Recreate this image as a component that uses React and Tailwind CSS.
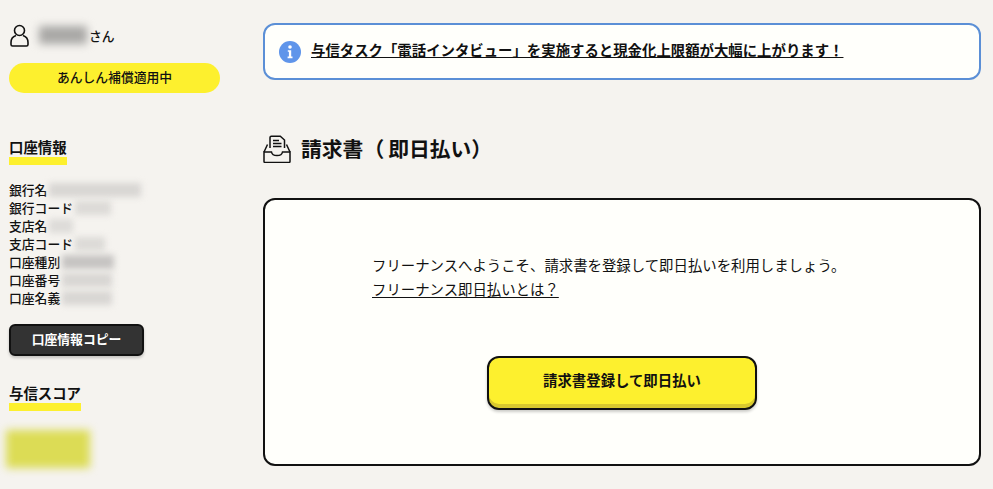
import React from "react";

const font = "font-['Noto_Sans_CJK_JP','Liberation_Sans',sans-serif]";

const accountRows = [
  { label: "銀行名", blur: "w-[92px]", tone: "bg-[#d8d6d3]" },
  { label: "銀行コード", blur: "w-[36px]", tone: "bg-[#dcdad7]" },
  { label: "支店名", blur: "w-[24px]", tone: "bg-[#dddbd8]" },
  { label: "支店コード", blur: "w-[30px]", tone: "bg-[#dcdad7]" },
  { label: "口座種別", blur: "w-[52px]", tone: "bg-[#c6c4c2]" },
  { label: "口座番号", blur: "w-[50px]", tone: "bg-[#d8d6d3]" },
  { label: "口座名義", blur: "w-[50px]", tone: "bg-[#d8d6d3]" },
];

const UserIcon = () => (
  <svg width="19" height="23" viewBox="0 0 19 23" fill="none" stroke="#111" strokeWidth="1.6">
    <circle cx="9.5" cy="6.5" r="5" />
    <path d="M6 11.5C3 12.5 1 15 1 18.5V20.5c0 1 .6 1.5 1.5 1.5h14c.9 0 1.5-.5 1.5-1.5v-2c0-3.5-2-6-5-7" />
  </svg>
);

const InfoIcon = () => (
  <svg width="22" height="22" viewBox="0 0 22 22" className="shrink-0">
    <circle cx="11" cy="11" r="11" fill="#5f95ea" />
    <circle cx="11" cy="6" r="1.8" fill="#fff" />
    <path d="M8.800 9.200h3.400v6.400h1.300v1.600H8.600v-1.600h1.300v-4.800H8.800z" fill="#fff" />
  </svg>
);

const InboxIcon = () => (
  <svg width="28" height="28" viewBox="0 0 28 28" fill="none" stroke="#111" strokeWidth="1.5" className="shrink-0">
    <path d="M1 17 4.500 9.500M27 17l-3.500-7.500" />
    <path d="M7 13V2.500c0-.8.500-1.300 1.300-1.300h9L21.500 5v8" />
    <path d="M10 5.500h6M10 8.500h8.500M10 11.500h8.500" />
    <path d="M1 17h7.500c.4 2.400 2.600 3.600 5.500 3.600s5.100-1.200 5.500-3.600H27v9.500c0 .5-.4.900-.9.900H1.900c-.5 0-.9-.4-.9-.9z" />
  </svg>
);

const Heading = ({ children }) => (
  <h2 className="w-fit text-[14.4px] leading-[20px] font-bold text-[#111] border-b-[8px] border-[#fdf02e]">
    {children}
  </h2>
);

export default function App() {
  return (
    <div className={`flex min-h-screen h-[489px] overflow-hidden bg-[#f5f3ef] text-[#111] ${font}`}>
      <aside className="w-[263px] shrink-0 pl-[9px] pt-[23px]">
        <div className="flex h-[24px] items-center">
          <div className="ml-[1px]">
            <UserIcon />
          </div>
          <div className="ml-[10px] h-[18px] w-[48px] bg-[#a9a8a6] blur-[4px]" />
          <span className="ml-[2px] mt-[1px] text-[12.8px] font-medium">さん</span>
        </div>
        <div className="mt-[16px] flex h-[30px] w-[211px] items-center justify-center rounded-full bg-[#fdf02e] pb-[2px] text-[12.8px] font-medium">
          あんしん補償適用中
        </div>

        <div className="mt-[44px]">
          <Heading>口座情報</Heading>
        </div>
        <dl className="mt-[16px] text-[12.8px] font-medium">
          {accountRows.map((row) => (
            <div key={row.label} className="flex h-[18px] items-center">
              <dt>{row.label}</dt>
              <dd className={`ml-[2px] h-[14px] ${row.blur} ${row.tone} blur-[3px]`} />
            </div>
          ))}
        </dl>
        <button className="mt-[17px] flex h-[32px] w-[135px] items-center justify-center rounded-[6px] border-2 border-[#111] bg-[#333] pb-[2px] text-[12.8px] font-bold text-white shadow-[0_2px_3px_rgba(0,0,0,0.2)]">
          口座情報コピー
        </button>

        <div className="mt-[27px]">
          <Heading>与信スコア</Heading>
        </div>
        <div className="ml-[-3px] mt-[19px] h-[38px] w-[84px] bg-[#dcdc55] blur-[4px]" />
      </aside>

      <main className="w-[718px] shrink-0 pt-[23px]">
        <a className="flex h-[57px] items-center rounded-[12px] border-2 border-[#5b8fd6] bg-[#fffffb] pl-[14px] text-[14.4px] font-bold">
          <InfoIcon />
          <span className="mb-[3px] ml-[10px] underline underline-offset-1">与信タスク「電話インタビュー」を実施すると現金化上限額が大幅に上がります！</span>
        </a>

        <div className="mt-[55px] flex h-[28px] items-center">
          <InboxIcon />
          <h1 className="ml-[10px] text-[20.8px] font-bold">
            請求書（<span className="ml-[4px]">即日払い）</span>
          </h1>
        </div>

        <section className="mt-[35px] h-[268px] rounded-[12px] border-2 border-[#111] bg-[#fffffb] pt-[53px]">
          <div className="pl-[107px] text-[14.4px] leading-[24px]">
            <p>フリーナンスへようこそ、請求書を登録して即日払いを利用しましょう。</p>
            <a className="underline underline-offset-2">フリーナンス即日払いとは？</a>
          </div>
          <button className="mx-auto mt-[55px] flex h-[54px] w-[270px] items-center justify-center rounded-[12px] border-2 border-[#111] bg-[#fdf02e] pb-[7px] text-[14.4px] font-bold shadow-[inset_0_-4px_0_#d9c92e,0_2px_3px_rgba(0,0,0,0.2)]">
            請求書登録して即日払い
          </button>
        </section>
      </main>
    </div>
  );
}
